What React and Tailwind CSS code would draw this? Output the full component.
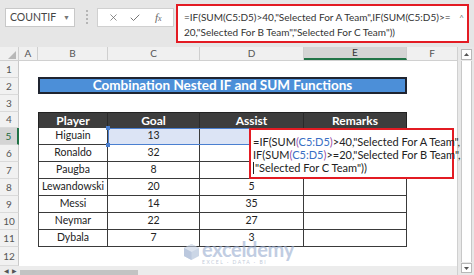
import { X, Check } from 'lucide-react';

const players = [
  { n: 5, player: 'Higuain', goal: '13', assist: '' },
  { n: 6, player: 'Ronaldo', goal: '32', assist: '' },
  { n: 7, player: 'Paugba', goal: '8', assist: '' },
  { n: 8, player: 'Lewandowski', goal: '20', assist: '5' },
  { n: 9, player: 'Messi', goal: '14', assist: '35' },
  { n: 10, player: 'Neymar', goal: '22', assist: '27' },
  { n: 11, player: 'Dybala', goal: '7', assist: '3' },
];

function RowHead({ n, active }) {
  return (
    <div
      className={`w-[19px] shrink-0 flex items-center justify-center text-[10px] border-b border-[#dadada] ${
        active
          ? 'bg-[#d4d4d4] text-[#1e6b3f] border-r-2 border-r-[#217346]'
          : 'bg-[#f1f1f1] text-[#555] border-r border-r-[#c9c9c9]'
      }`}
    >
      {n}
    </div>
  );
}

function Ref({ children }) {
  return (
    <>
      <span className="text-[#9a4fa8]">(</span>
      <span className="text-[#3a6fc4]">{children}</span>
      <span className="text-[#9a4fa8]">)</span>
    </>
  );
}

export default function App() {
  return (
    <div className="w-[474px] h-[275px] overflow-hidden bg-white relative flex flex-col font-[Lato,sans-serif] text-[#222]">
      {/* formula bar */}
      <div className="h-[47px] shrink-0 bg-[#e6e6e6] flex items-start">
        <div className="ml-[5px] mt-[8px] w-[70px] h-[19px] bg-white border border-[#c8c8c8] flex items-center pl-[4px] pr-[4px] text-[10.5px] text-[#444]">
          <span className="flex-1">COUNTIF</span>
          <span className="text-[7px] text-[#777]">▼</span>
        </div>
        <div className="ml-[11px] mt-[10px] flex flex-col gap-[2px]">
          <span className="w-[2px] h-[2px] bg-[#b5b5b5]" />
          <span className="w-[2px] h-[2px] bg-[#b5b5b5]" />
          <span className="w-[2px] h-[2px] bg-[#b5b5b5]" />
          <span className="w-[2px] h-[2px] bg-[#b5b5b5]" />
        </div>
        <div className="ml-[9px] mt-[8px] w-[77px] h-[19px] bg-white border border-[#d0d0d0] flex items-center text-[#666]">
          <X size={11} strokeWidth={1.6} className="ml-[10px]" />
          <Check size={12} strokeWidth={1.8} className="ml-[10px]" />
          <span className="ml-[14px] text-[11px] italic font-['Liberation_Serif',serif]">
            f<span className="text-[8px]">x</span>
          </span>
        </div>
        <div className="ml-[2px] mt-[4px] w-[293px] h-[39px] bg-white border-2 border-[#e31b23] relative pl-[6px] pt-[4px] text-[10px] leading-[15px] text-[#333]">
          <div className="whitespace-nowrap">=IF(SUM(C5:D5)&gt;40,"Selected For A Team",IF(SUM(C5:D5)&gt;=</div>
          <div className="whitespace-nowrap">20,"Selected For B Team","Selected For C Team"))</div>
          <span className="absolute right-[3px] top-[5px] text-[8px] text-[#777]">^</span>
        </div>
      </div>

      <div className="flex flex-1 min-h-0">
        <div className="w-[457px] flex flex-col">
          {/* column headers */}
          <div className="h-[14px] flex bg-[#f0f0f0] border-b border-[#d0d0d0] text-[10px] text-[#555]">
            <div className="w-[19px] border-r border-[#cfcfcf] flex items-end justify-end pr-[2px] pb-[1px]">
              <svg width="8" height="8" viewBox="0 0 8 8">
                <path d="M8 0 L8 8 L0 8 Z" fill="#b8b8b8" />
              </svg>
            </div>
            <div className="w-[19px] border-r border-[#cfcfcf] flex items-center justify-center">A</div>
            <div className="w-[70px] border-r border-[#cfcfcf] flex items-center justify-center">B</div>
            <div className="w-[92px] border-r border-[#cfcfcf] flex items-center justify-center">C</div>
            <div className="w-[104px] border-r border-[#cfcfcf] flex items-center justify-center">D</div>
            <div className="w-[103px] border-r border-[#cfcfcf] bg-[#d4d4d4] border-b-2 border-b-[#217346] flex items-center justify-center text-[#333]">E</div>
            <div className="flex-1 flex items-center justify-center">F</div>
          </div>

          {/* rows 1-3 */}
          <div className="h-[17px] flex">
            <RowHead n={1} />
          </div>
          <div className="h-[17px] flex">
            <RowHead n={2} />
            <div className="w-[19px]" />
            <div className="w-[369px] h-[17px] -mt-[1px] bg-[#4c8fd8] border-2 border-[#1f2430] flex items-center justify-center text-white font-bold text-[13.5px]">
              Combination Nested IF and SUM Functions
            </div>
          </div>
          <div className="h-[17px] flex">
            <RowHead n={3} />
          </div>

          {/* table header */}
          <div className="h-[16px] flex">
            <RowHead n={4} />
            <div className="w-[19px]" />
            {['Player', 'Goal', 'Assist', 'Remarks'].map((h, i) => (
              <div
                key={h}
                className={`${['w-[70px]', 'w-[92px]', 'w-[104px]', 'w-[103px]'][i]} bg-[#3d3d3d] border-t border-[#222] ${
                  i === 0 ? 'border-l' : ''
                } ${i === 3 ? 'border-r border-r-[#222]' : 'border-r border-r-[#2a2a2a]'} flex items-center justify-center text-white font-bold text-[12px]`}
              >
                {h}
              </div>
            ))}
          </div>

          {players.map((p) => (
            <div key={p.n} className="h-[17px] flex">
              <RowHead n={p.n} active={p.n === 5} />
              <div className="w-[19px]" />
              <div className="w-[70px] border-l border-r border-b border-[#3a3a3a] flex items-center justify-center text-[10.5px]">
                {p.player}
              </div>
              <div
                className={`w-[92px] border-r border-b border-[#3a3a3a] flex items-center justify-center text-[10.5px] ${
                  p.n === 5 ? 'bg-[#dce4f5]' : ''
                }`}
              >
                {p.goal}
              </div>
              <div
                className={`w-[104px] border-r border-b border-[#3a3a3a] flex items-center justify-center text-[10.5px] ${
                  p.n === 5 ? 'bg-[#dce4f5]' : ''
                }`}
              >
                {p.assist}
              </div>
              <div className="w-[103px] border-r border-b border-[#3a3a3a]" />
            </div>
          ))}

          <div className="h-[19px] flex">
            <RowHead n={12} />
          </div>

          {/* horizontal scroll strip */}
          <div className="flex-1 bg-[#ececec] flex items-end">
            <div className="w-[20px] h-full flex items-center justify-center gap-[3px] text-[6px] text-[#555]">
              <span>◀</span>
              <span>▶</span>
            </div>
            <div className="w-[118px] h-[5px] bg-[#c3c3c3]" />
          </div>
        </div>

        {/* vertical scrollbar */}
        <div className="flex-1 bg-[#e8e8e8] border-l border-[#d0d0d0] flex flex-col items-center pt-[2px] pb-[2px]">
          <div className="w-[11px] h-[11px] bg-white border border-[#b8b8b8] flex items-center justify-center">
            <svg width="5" height="3" viewBox="0 0 5 3">
              <path d="M0 3 L2.5 0 L5 3 Z" fill="#555" />
            </svg>
          </div>
          <div className="w-[11px] flex-1 bg-white border-x border-[#c8c8c8] my-[1px]" />
          <div className="w-[11px] h-[10px] bg-white border border-[#b8b8b8] flex items-center justify-center">
            <svg width="5" height="3" viewBox="0 0 5 3">
              <path d="M0 0 L2.5 3 L5 0 Z" fill="#555" />
            </svg>
          </div>
        </div>
      </div>

      {/* referenced range C5:D5 */}
      <div className="absolute left-[108px] top-[128px] w-[196px] h-[17px] border border-[#4a7fd0] pointer-events-none" />
      <div className="absolute left-[106px] top-[126px] w-[4px] h-[4px] bg-[#4a7fd0]" />
      <div className="absolute left-[106px] top-[143px] w-[4px] h-[4px] bg-[#4a7fd0]" />

      {/* in-cell editor */}
      <div className="absolute left-[249px] top-[128px] w-[205px] h-[51px] bg-white border-2 border-[#e31b23] pl-[2px] pt-[5px] text-[11px] leading-[13px] text-[#222] whitespace-nowrap">
        <div>
          =IF(SUM<Ref>C5:D5</Ref>&gt;40,"Selected For A Team",
        </div>
        <div>
          IF(SUM<Ref>C5:D5</Ref>&gt;=20,"Selected For B Team",
        </div>
        <div className="flex items-center">
          <span className="w-[1px] h-[12px] bg-[#222] mr-[1px]" />
          "Selected For C Team"))
        </div>
      </div>

      {/* watermark */}
      <div className="absolute left-[183px] top-[239px] flex items-center gap-[2px] opacity-60 pointer-events-none">
        <svg width="17" height="18" viewBox="0 0 17 18">
          <path d="M8.5 1 L16 5 L16 13 L8.5 17 L1 13 L1 5 Z" fill="#a9bbd6" />
          <path d="M8.5 1 L16 5 L8.5 9 L1 5 Z" fill="#c5d2e6" />
          <path d="M8.5 9 L8.5 17 L1 13 L1 5 Z" fill="#8ea5c9" />
        </svg>
        <div className="flex flex-col leading-none">
          <span className="text-[20px] font-bold text-[#98acd0] tracking-[-0.3px]">exceldemy</span>
          <span className="text-[5px] tracking-[1.5px] text-[#9aa9c2] mt-[1px]">EXCEL · DATA · BI</span>
        </div>
      </div>
    </div>
  );
}
